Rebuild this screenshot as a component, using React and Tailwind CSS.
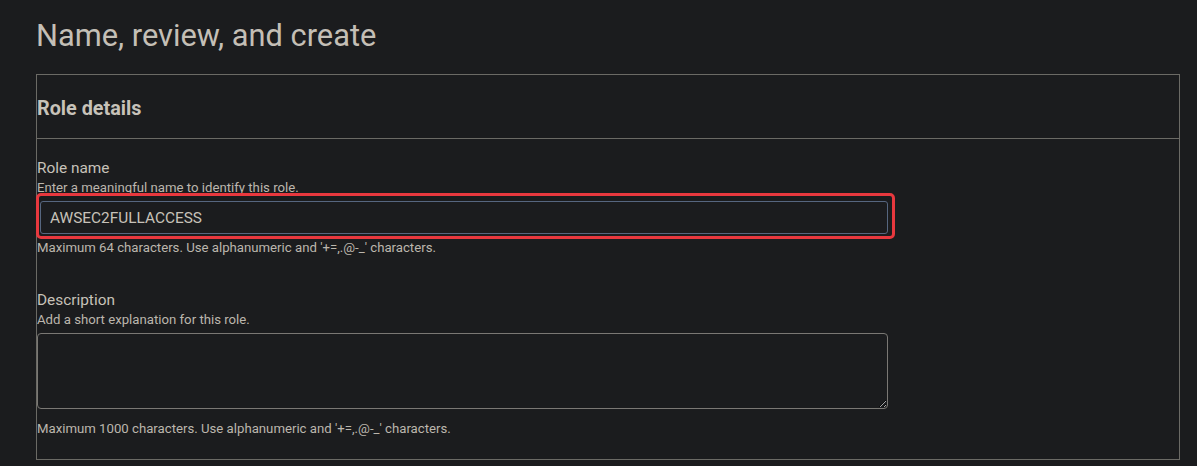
export default function App() {
  return (
    <div className="min-h-screen bg-[#1b1c1e] pl-9 pr-[17px] pt-[14px] font-['Roboto',sans-serif] text-[#c7c2b9]">
      <h1 className="text-[30.8px] leading-[44px] font-normal text-[#c4bfb6]">Name, review, and create</h1>

      <div className="mt-4 border border-[#6b6a65]">
        <div className="border-b border-[#6b6a65] pt-[22px] pb-[17px]">
          <h2 className="text-[19.8px] leading-6 font-bold">Role details</h2>
        </div>

        <div className="pt-[19px] pb-[22px]">
          <label className="block text-[15.4px] leading-5">Role name</label>
          <p className="mt-[2px] text-[13.2px] leading-4 text-[#bbb6ad]">Enter a meaningful name to identify this role.</p>
          <div className="relative mt-[5px] ml-[3px] w-[848px]">
            <input
              type="text"
              defaultValue="AWSEC2FULLACCESS"
              className="block h-[33px] w-full rounded-[3px] border border-[#56667f] bg-[#1b1c1e] pl-[9px] text-[15.4px] text-[#c7c2b9] outline-none"
            />
            <div className="pointer-events-none absolute -left-[4px] -top-[8px] -right-[7px] -bottom-[5px] rounded-[5px] border-[3.5px] border-[#e8383e]" />
          </div>
          <p className="mt-[6px] text-[13.2px] leading-4 text-[#bbb6ad]">
            Maximum 64 characters. Use alphanumeric and '+=,.@-_' characters.
          </p>

          <label className="mt-[34px] block text-[15.4px] leading-5">Description</label>
          <p className="mt-[2px] text-[13.2px] leading-4 text-[#bbb6ad]">Add a short explanation for this role.</p>
          <textarea className="mt-[5px] block h-[76px] w-[851px] rounded-[4px] border border-[#7a7874] bg-[#1b1c1e] outline-none" />
          <p className="mt-[12px] text-[13.2px] leading-4 text-[#bbb6ad]">
            Maximum 1000 characters. Use alphanumeric and '+=,.@-_' characters.
          </p>
        </div>
      </div>
    </div>
  );
}
